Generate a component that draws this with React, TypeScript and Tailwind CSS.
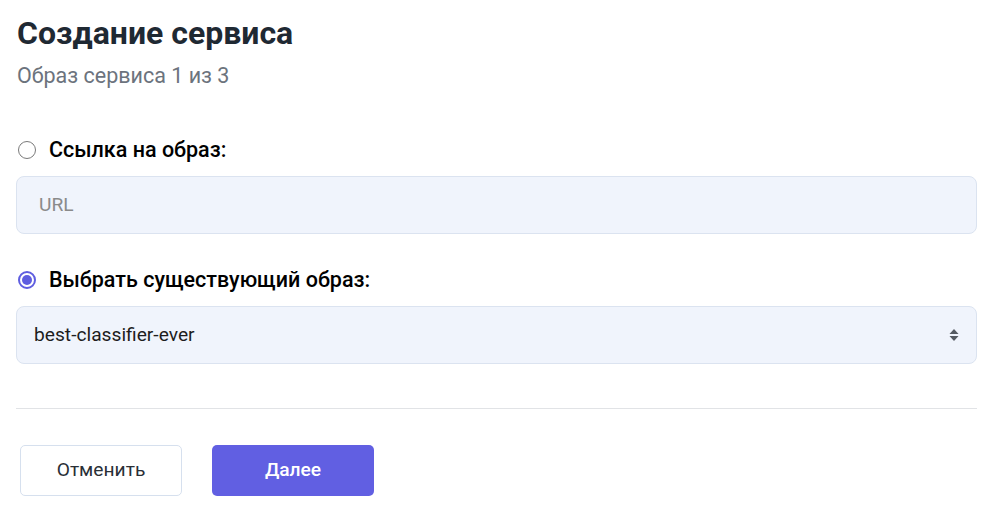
import React from "react"

const Radio = (props: { checked?: boolean }) => {
  if (props.checked) {
    return (
      <span className="flex h-[18px] w-[18px] items-center justify-center rounded-full border-2 border-[#5f5ee0] bg-white">
        <span className="h-[10px] w-[10px] rounded-full bg-[#5f5ee0]" />
      </span>
    )
  }
  return <span className="h-[18px] w-[18px] rounded-full border border-[#7a7a7a] bg-white" />
}

export default function App() {
  return (
    <div className="min-h-screen bg-white font-['Roboto',sans-serif] px-4 pt-[13px]">
      <h1 className="pl-[1px] text-[32px] font-bold leading-[40px] text-[#1f2933]">Создание сервиса</h1>
      <p className="mt-[10px] pl-[1px] text-[21.5px] leading-[26px] text-[#6c737d]">Образ сервиса 1 из 3</p>

      <div className="mt-[48px] flex items-center gap-[13px] pl-[2px]">
        <Radio />
        <span className="text-[21.5px] font-medium leading-[26px] text-black">Ссылка на образ:</span>
      </div>
      <div className="mt-[13px] flex h-[58px] w-[961px] items-center rounded-lg border border-[#dbe3f0] bg-[#f0f4fc] px-[22px]">
        <span className="text-[19.2px] text-[#8a8a8a]">URL</span>
      </div>

      <div className="mt-[33px] flex items-center gap-[13px] pl-[2px]">
        <Radio checked />
        <span className="text-[21.5px] font-medium leading-[26px] text-black">Выбрать существующий образ:</span>
      </div>
      <div className="mt-[13px] flex h-[58px] w-[961px] items-center justify-between rounded-lg border border-[#dbe3f0] bg-[#f0f4fc] pl-[17px] pr-[17px]">
        <span className="text-[19.2px] text-[#1d1d1d]">best-classifier-ever</span>
        <svg width="10" height="14" viewBox="0 0 10 14">
          <path d="M5 1 L9.5 6 H0.5 Z" fill="#555a62" />
          <path d="M5 13 L9.5 8 H0.5 Z" fill="#555a62" />
        </svg>
      </div>

      <div className="mt-[44px] h-px w-[961px] bg-[#e1e3e6]" />

      <div className="mt-[36px] flex gap-[30px] pl-[4px]">
        <button className="h-[51px] w-[162px] rounded-[5px] border border-[#d6e0ee] bg-white text-[19.2px] text-[#2a2f36]">Отменить</button>
        <button className="h-[51px] w-[162px] rounded-[5px] bg-[#615fe2] text-[19.2px] font-medium text-white">Далее</button>
      </div>
    </div>
  )
}
